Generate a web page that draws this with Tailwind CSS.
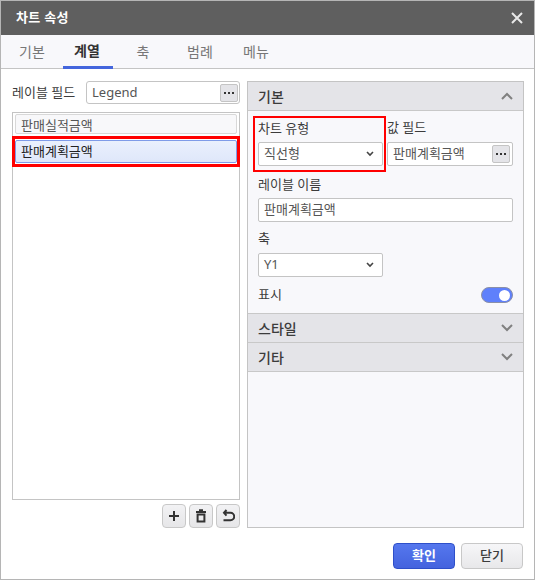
<!DOCTYPE html>
<html lang="ko">
<head>
<meta charset="UTF-8">
<title>차트 속성</title>
<script src="https://cdn.jsdelivr.net/npm/@tailwindcss/browser@4"></script>
</head>
<body class="bg-white">
<div class="w-[535px] h-[580px] flex flex-col border border-[#b5b5b5] bg-white text-[13px] text-[#3c3c3c] font-['Noto_Sans','Noto_Sans_CJK_KR',sans-serif] overflow-hidden">

  <!-- title -->
  <div class="h-[34px] shrink-0 bg-[#5f5f5f] flex items-center justify-between pl-[15px] pr-[10px]">
    <span class="text-white font-bold text-[13px] tracking-[0.3px]">차트 속성</span>
    <svg class="w-[14px] h-[14px]" viewBox="0 0 14 14" fill="none" stroke="#e8e8e8" stroke-width="2"><path d="M2 2l10 10M12 2L2 12"/></svg>
  </div>

  <!-- tabs -->
  <div class="h-[34px] shrink-0 bg-[#f8f8fb] border-b border-[#c4c4c4] flex pl-[1px] text-[14px] text-[#777]">
    <div class="w-[60px] flex items-center justify-center">기본</div>
    <div class="w-[50px] ml-[1px] flex items-center justify-center pr-[2px] font-bold text-[#333] border-b-[3px] border-[#4466dd] h-[34px]">계열</div>
    <div class="w-[60px] flex items-center justify-center">축</div>
    <div class="w-[54px] flex items-center justify-center">범례</div>
    <div class="w-[58px] flex items-center justify-center">메뉴</div>
  </div>

  <!-- body -->
  <div class="flex-1 flex gap-[7px] pl-[11px] pr-[10px] pt-[12px]">
    <div class="w-[228px] flex flex-col">
      <div class="flex items-center h-[23px]">
        <span class="w-[74px] shrink-0">레이블 필드</span>
        <div class="flex-1 h-[23px] border border-[#c4c4c4] rounded-[3px] bg-white flex items-center justify-between pl-[5px] pr-px">
          <span class="text-[#555]">Legend</span>
          <span class="w-[18px] h-[18px] bg-[#e4e4e8] border border-[#c4c4c4] rounded-[2px] flex items-center justify-center">
            <svg class="w-[10px] h-[4px]" viewBox="0 0 10 4" fill="#333"><rect x="0" y="1" width="2" height="2"/><rect x="4" y="1" width="2" height="2"/><rect x="8" y="1" width="2" height="2"/></svg>
          </span>
        </div>
      </div>
      <div class="mt-[8px] h-[388px] border border-[#c4c4c4] bg-white px-[2px] pt-[1px]">
        <div class="h-[20px] border border-[#d8d8d8] rounded-[2px] bg-[#f8f8fa] flex items-center pl-[5px] pt-[3px] text-[#555]">판매실적금액</div>
        <div class="mt-[2px] -mx-[3px] border-[3px] border-[#ff0000] py-px">
          <div class="h-[23px] border border-[#7f9be8] rounded-[2px] bg-gradient-to-b from-[#eaf0fd] to-[#dfe7fa] flex items-center pl-[5px] text-[#222]">판매계획금액</div>
        </div>
      </div>
      <div class="mt-[4px] flex justify-end gap-[3px]">
        <span class="w-[24px] h-[24px] bg-gradient-to-b from-[#f2f2f4] to-[#e6e6e8] border border-[#c8c8c8] rounded-[4px] flex items-center justify-center">
          <svg class="w-[12px] h-[12px]" viewBox="0 0 12 12" fill="none" stroke="#333" stroke-width="2"><path d="M6 1v10M1 6h10"/></svg>
        </span>
        <span class="w-[24px] h-[24px] bg-gradient-to-b from-[#f2f2f4] to-[#e6e6e8] border border-[#c8c8c8] rounded-[4px] flex items-center justify-center">
          <svg class="w-[12px] h-[14px]" viewBox="0 0 12 14" fill="none" stroke="#333" stroke-width="2"><path d="M1 3h10M4 1.2h4M2.6 5.5h6.8v7H2.6z"/></svg>
        </span>
        <span class="w-[24px] h-[24px] bg-gradient-to-b from-[#f2f2f4] to-[#e6e6e8] border border-[#c8c8c8] rounded-[4px] flex items-center justify-center">
          <svg class="w-[13px] h-[14px]" viewBox="0 0 13 14" fill="none" stroke="#333" stroke-width="2"><path d="M4.5 1L2 3.8 4.5 6.6M2 3.8h6.5a3 3 0 010 7.4H1.5"/></svg>
        </span>
      </div>
    </div>

    <div class="w-[277px] h-[447px] border border-[#c4c4c4] bg-[#f8f8fb] flex flex-col">
      <div class="h-[29px] shrink-0 bg-[#e4e4e8] border-b border-[#c8c8c8] flex items-center justify-between pl-[10px] pr-[10px] font-medium text-[14px]">
        <span>기본</span>
        <svg class="w-[12px] h-[8px]" viewBox="0 0 12 8" fill="none" stroke="#808080" stroke-width="2"><path d="M1 7l5-5 5 5"/></svg>
      </div>
      <div class="h-[202px] shrink-0 pl-[10px]">
        <div class="flex gap-[1px] -ml-[5px] mt-[5px]">
          <div class="w-[133px] h-[56px] border-[2px] border-[#ff0000] pl-[3px] pr-[1px]">
            <div class="h-[24px] pb-[2px] flex items-center">차트 유형</div>
            <div class="h-[24px] border border-[#c4c4c4] rounded-[2px] bg-white flex items-center justify-between pl-[5px] pr-[8px] text-[#555]">
              <span>직선형</span>
              <svg class="w-[8px] h-[6px]" viewBox="0 0 8 6" fill="none" stroke="#444" stroke-width="1.6"><path d="M1 1l3 3 3-3"/></svg>
            </div>
          </div>
          <div class="w-[126px]">
            <div class="h-[26px] pb-[2px] flex items-center">값 필드</div>
            <div class="h-[24px] border border-[#c4c4c4] rounded-[2px] bg-white flex items-center justify-between pl-[5px] pr-[2px] text-[#555]">
              <span>판매계획금액</span>
              <span class="w-[18px] h-[18px] bg-[#e4e4e8] border border-[#c4c4c4] rounded-[2px] flex items-center justify-center">
                <svg class="w-[10px] h-[4px]" viewBox="0 0 10 4" fill="#333"><rect x="0" y="1" width="2" height="2"/><rect x="4" y="1" width="2" height="2"/><rect x="8" y="1" width="2" height="2"/></svg>
              </span>
            </div>
          </div>
        </div>
        <div class="h-[25px] flex items-center">레이블 이름</div>
        <div class="mt-[1px] h-[24px] w-[255px] border border-[#c4c4c4] rounded-[2px] bg-white flex items-center pl-[5px] text-[#555]">판매계획금액</div>
        <div class="mt-[7px] h-[20px] flex items-center">축</div>
        <div class="mt-[4px] h-[24px] w-[125px] border border-[#c4c4c4] rounded-[2px] bg-white flex items-center justify-between pl-[5px] pr-[8px] text-[#555]">
          <span>Y1</span>
          <svg class="w-[8px] h-[6px]" viewBox="0 0 8 6" fill="none" stroke="#444" stroke-width="1.6"><path d="M1 1l3 3 3-3"/></svg>
        </div>
        <div class="mt-[8px] w-[255px] h-[20px] flex items-center justify-between">
          <span>표시</span>
          <span class="w-[32px] h-[16px] rounded-full bg-[#5f80fb] border border-[#8a8fa8] flex items-center justify-end pr-[2px]">
            <span class="w-[11px] h-[11px] rounded-full bg-white"></span>
          </span>
        </div>
      </div>
      <div class="h-[30px] shrink-0 bg-[#e4e4e8] border-y border-[#c8c8c8] flex items-center justify-between pl-[10px] pr-[10px] font-medium text-[14px]">
        <span>스타일</span>
        <svg class="w-[12px] h-[8px]" viewBox="0 0 12 8" fill="none" stroke="#808080" stroke-width="2"><path d="M1 1l5 5 5-5"/></svg>
      </div>
      <div class="h-[29px] shrink-0 bg-[#e4e4e8] border-b border-[#c8c8c8] flex items-center justify-between pl-[10px] pr-[10px] font-medium text-[14px]">
        <span>기타</span>
        <svg class="w-[12px] h-[8px]" viewBox="0 0 12 8" fill="none" stroke="#808080" stroke-width="2"><path d="M1 1l5 5 5-5"/></svg>
      </div>
    </div>
  </div>

  <!-- footer -->
  <div class="h-[48px] shrink-0 flex justify-end gap-[6px] pr-[11px] pt-[12px]">
    <span class="w-[62px] h-[26px] rounded-[4px] border border-[#2e4fc9] bg-gradient-to-b from-[#5577ee] to-[#4463de] text-white font-bold flex items-center justify-center">확인</span>
    <span class="w-[62px] h-[26px] rounded-[4px] border border-[#c8c8c8] bg-gradient-to-b from-[#f6f6f8] to-[#e8e8ea] font-medium flex items-center justify-center">닫기</span>
  </div>
</div>
</body>
</html>
